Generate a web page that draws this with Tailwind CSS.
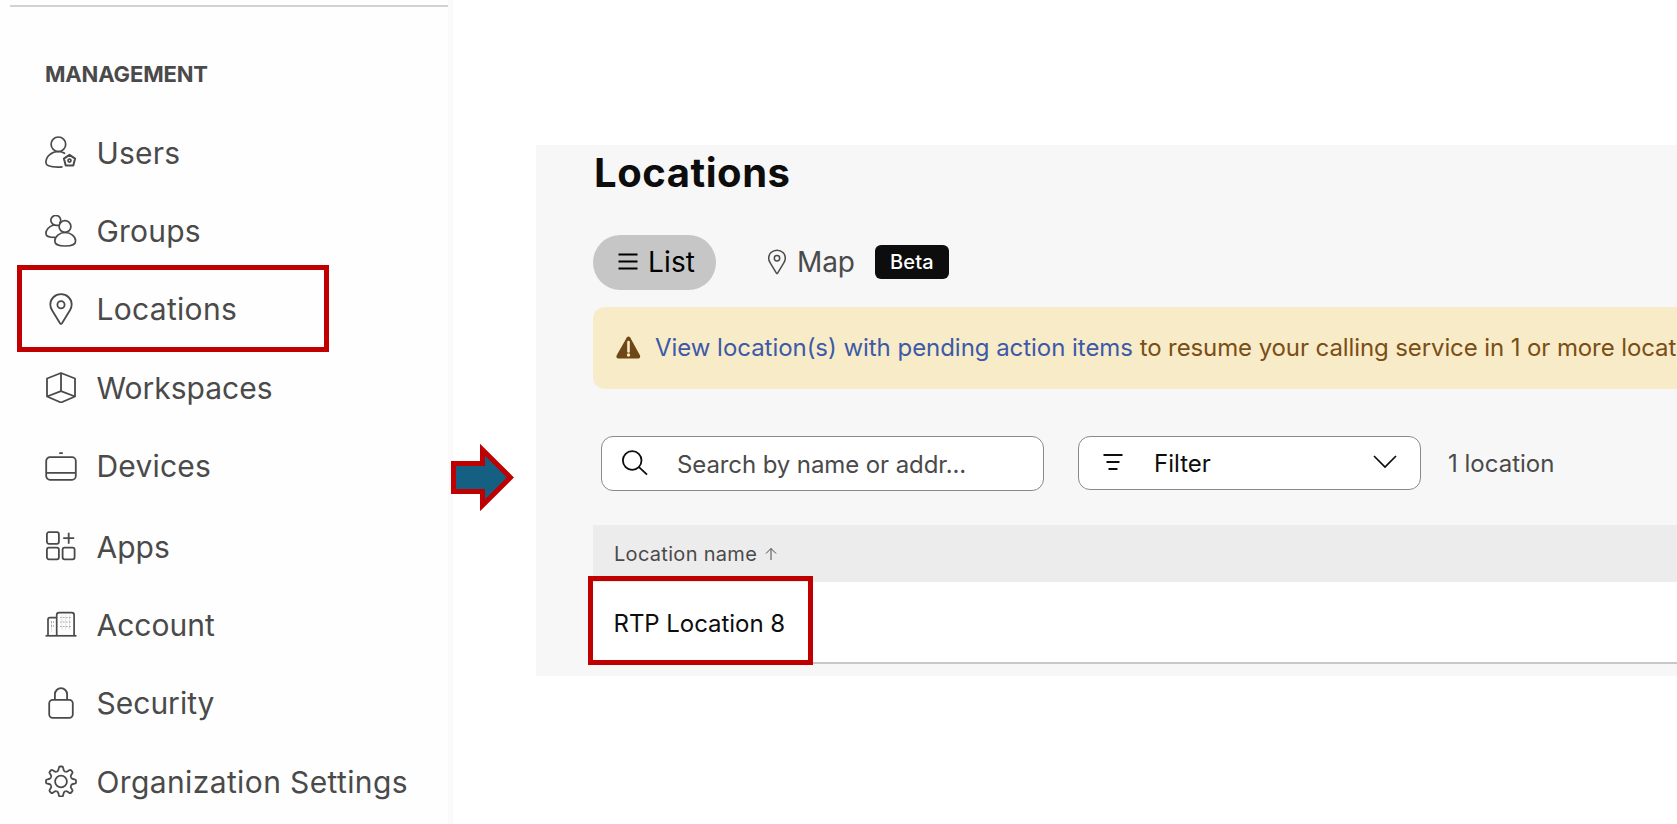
<!DOCTYPE html>
<html lang="en">
<head>
<meta charset="utf-8">
<title>Locations</title>
<script src="https://cdn.jsdelivr.net/npm/@tailwindcss/browser@4"></script>
</head>
<body class="h-[824px] w-[1677px] overflow-hidden bg-white font-['Inter',sans-serif]">
<div class="relative flex h-[824px] w-[1677px] overflow-hidden">

  <aside class="flex h-full w-[453px] shrink-0 border-r-[5px] border-[#fafafa] bg-[#fefefe]">
    <div class="mt-[5px] ml-[10px] flex w-[438px] flex-col border-t-2 border-[#d2d2d2] pl-[35px] text-[#4a4a4a]">
      <h2 class="mt-[53px] h-7 text-[22px] leading-7 font-bold tracking-[-0.15px] whitespace-nowrap">MANAGEMENT</h2>
      <nav class="mt-[25px] flex flex-col text-[30px] whitespace-nowrap">
        <a class="flex h-[78.4px] items-center gap-[19.5px]">
          <svg class="size-8 shrink-0" viewBox="0 0 32 32" fill="none" stroke="currentColor" stroke-width="1.7"><circle cx="13.4" cy="8.3" r="7.3"/><path d="M19.500 17.300C17.800 16 15.700 15.500 13.400 15.500 7 15.500 .9 20 .9 26.500c0 3.500 5 4.600 12 4.600 1.700 0 3 0 4-.2" stroke-linecap="round"/><path d="M24.500 18.800l5.600 3.800-1.800 6.800h-7.600l-1.800-6.800z" stroke-width="2" stroke-linejoin="round"/><circle cx="24.500" cy="24.600" r="1.500"/></svg>
          <span class="pt-0.5 tracking-[0.2px]">Users</span></a>
        <a class="flex h-[78.4px] items-center gap-[19.5px]">
          <svg class="size-8 shrink-0" viewBox="0 0 32 32" fill="none" stroke="currentColor" stroke-width="1.7"><circle cx="20" cy="11.500" r="5.900"/><path d="M20 17.500c-5.500 0-10.200 4-10.200 8.500 0 3.600 4 5 10.400 5s10.400-1.400 10.400-5c0-4.500-4.700-8.500-10.600-8.500z"/><path d="M14.500 8.500a4.900 4.900 0 1 0-4.600 1.600c.8.200 2.700.2 4 .2M7.800 10.200C4 11.500.9 15 .9 18.400c0 2.700 3 4 9.200 4"/></svg>
          <span class="pt-0.5 tracking-[0.2px]">Groups</span></a>
        <a class="flex h-[78.4px] items-center gap-[19.5px]">
          <svg class="size-8 shrink-0" viewBox="0 0 32 32" fill="none" stroke="currentColor" stroke-width="1.8"><path d="M16 1.200C9.900 1.200 5.300 5.900 5.300 11.500c0 2.200.8 4.200 1.900 6L15 30.300q1 1.400 2 0l7.800-12.800c1.100-1.800 1.900-3.800 1.900-6C26.700 5.900 22.100 1.200 16 1.200z"/><circle cx="16" cy="11.700" r="3.600"/></svg>
          <span class="pt-0.5 tracking-[0.3px]">Locations</span></a>
        <a class="flex h-[78.4px] items-center gap-[19.5px]">
          <svg class="size-8 shrink-0" viewBox="0 -1 32 32" fill="none" stroke="currentColor" stroke-width="1.800" stroke-linejoin="round"><path d="M16 1l14 5.500v18L16 30.500 2 24.500v-18zM16 1v18.200M2 24.500l14-5.300 14 5.300"/></svg>
          <span class="pt-0.5">Workspaces</span></a>
        <a class="flex h-[78.4px] items-center gap-[19.5px]">
          <svg class="size-8 shrink-0" viewBox="0 -1 32 32" fill="none" stroke="currentColor" stroke-width="1.800"><rect x="1.200" y="6.200" width="29.600" height="22.600" rx="3.800"/><path d="M1.200 21.800h29.600M14.200 2.200h3.600"/></svg>
          <span class="pt-0.5 tracking-[0.2px]">Devices</span></a>
        <a class="mt-[2px] flex h-[78.4px] items-center gap-[19.5px]">
          <svg class="size-8 shrink-0" viewBox="0 0 32 32" fill="none" stroke="currentColor" stroke-width="1.800"><rect x="1.900" y="2.200" width="12" height="11.600" rx="2"/><rect x="1.900" y="17.700" width="12" height="11.600" rx="2"/><rect x="17.600" y="17.700" width="12" height="11.600" rx="2"/><path d="M18.200 8.200h11M23.700 2.700v11"/></svg>
          <span class="pt-0.5">Apps</span></a>
        <a class="flex h-[78.4px] items-center gap-[19.5px]">
          <svg class="size-8 shrink-0" viewBox="0 1 32 32" fill="none" stroke="currentColor" stroke-width="1.700"><path d="M.5 27.800h31"/><path d="M11.700 27.800V7c0-1.600.8-2.400 2.400-2.400h12.600c1.600 0 2.400.8 2.400 2.400v20.800M3 27.800V11.600c0-1.400.6-2 2-2h6.700"/><path d="M15 9.500h11M15 14h11M15 18.500h11" stroke-dasharray="1.600 1.400" stroke-width="1.200" opacity=".45"/><path d="M17 7v15M20.700 7v15M24.400 7v15M6.500 13v11" stroke-width=".8" opacity=".2"/><path d="M6 14h3M6 18h3" stroke-dasharray="1 1" opacity=".5"/></svg>
          <span class="pt-0.5">Account</span></a>
        <a class="flex h-[78.4px] items-center gap-[19.5px]">
          <svg class="size-8 shrink-0" viewBox="0 0 32 32" fill="none" stroke="currentColor" stroke-width="1.800"><rect x="4.200" y="12.800" width="23.600" height="18" rx="3.500"/><path d="M9.900 12.800V7.300a6.100 6.100 0 0 1 12.200 0v5.500"/></svg>
          <span class="pt-0.5">Security</span></a>
        <a class="flex h-[78.4px] items-center gap-[19.5px]">
          <svg class="size-8 shrink-0" viewBox="-16 -16.500 32 32" fill="none" stroke="currentColor" stroke-width="1.800" stroke-linejoin="round"><circle r="5.900"/><path id="tooth" d="M-4.130 -9.980C-3 -10.300-2.700 -11-2.500 -12L-2.200 -13.600Q-2 -15-.9 -15H.9Q2 -15 2.200 -13.600L2.500 -12C2.700 -11 3 -10.300 4.130 -9.980"/><use href="#tooth" transform="rotate(45)"/><use href="#tooth" transform="rotate(90)"/><use href="#tooth" transform="rotate(135)"/><use href="#tooth" transform="rotate(180)"/><use href="#tooth" transform="rotate(225)"/><use href="#tooth" transform="rotate(270)"/><use href="#tooth" transform="rotate(315)"/></svg>
          <span class="pt-0.5 tracking-[0.38px]">Organization Settings</span></a>
      </nav>
    </div>
  </aside>

  <main class="mt-[145px] ml-[83px] flex h-[531px] flex-1 flex-col overflow-hidden bg-[#f7f7f7] pl-[57px] whitespace-nowrap">
    <h1 class="mt-1 h-12 pl-px text-[40px] leading-12 font-bold tracking-[0.55px] text-[#0d0d0d]">Locations</h1>
    <div class="mt-[38px] flex h-[55px] items-center text-[28px]">
      <div class="flex h-[55px] w-[123px] items-center rounded-full bg-[#c6c6c6] pb-0.5 pl-6 text-black">
        <svg class="mr-[9px] h-5 w-[22px]" viewBox="0 0 22 20" fill="none" stroke="currentColor" stroke-width="1.800"><path d="M1.500 2.500h19M1.500 9.500h19M1.500 16.500h19"/></svg>
        <span class="tracking-[0.15px]">List</span></div>
      <div class="ml-[51px] flex items-center pb-0.5 text-[#4a4a4a]">
        <svg class="mr-[10px] h-[26px] w-[20px]" viewBox="0 0 20 26" fill="none" stroke="currentColor" stroke-width="1.500"><path d="M10 1.200c-4.800 0-8.300 3.600-8.300 8 0 1.700.6 3.300 1.500 4.700l6.200 10.300q.6.900 1.200 0l6.200-10.300c.9-1.400 1.500-3 1.500-4.700 0-4.400-3.500-8-8.300-8z"/><circle cx="10" cy="9.300" r="2.700"/></svg>
        <span class="tracking-[-0.1px]">Map</span></div>
      <div class="mb-0.5 ml-5 flex h-[34px] w-[74px] items-center justify-center rounded-md bg-[#0d0d0d] text-xl font-medium tracking-[0.2px] text-white">Beta</div>
    </div>
    <div class="mt-[17px] flex h-[82px] shrink-0 items-center rounded-l-[12px] bg-[#f8ebc8] pl-[23px] text-[24px] text-[#7a4e16]">
      <svg class="mr-[14px] h-[24px] w-[25px] shrink-0" viewBox="0 0 25 24"><path d="M10.800 1.500q1.700-2.200 3.400 0l9.800 18q.8 3-1.800 3H2.200q-2.400 0-1.600-3z" fill="#6f4615"/><path d="M12.500 6v9.500" stroke="#f8ebc8" stroke-width="2.600" stroke-linecap="round"/><circle cx="12.500" cy="19" r="1.700" fill="#f8ebc8"/></svg>
      <p class="tracking-[-0.1px]"><span class="tracking-[-0.04px] text-[#3c5aa8]">View location(s) with pending action items</span> to resume your calling service in 1 or more locat</p>
    </div>
    <div class="mt-[47px] ml-2 flex h-[55px] shrink-0 items-start text-[24px]">
      <div class="flex h-[55px] w-[443px] items-center rounded-[12px] border border-[#8a8a8a] bg-white pl-5 text-[#4a4a4a]">
        <svg class="mr-[29px] mb-0.5 size-[26px]" viewBox="0 0 26 26" fill="none" stroke="#0d0d0d" stroke-width="1.800"><circle cx="10.200" cy="10.500" r="9.300"/><path d="M17 17.200l8 7.500"/></svg>
        <span class="pt-0.5 tracking-[-0.1px]">Search by name or addr...</span></div>
      <div class="ml-[34px] flex h-[54px] w-[343px] items-center rounded-[12px] border border-[#8a8a8a] bg-white pl-6 text-[#0d0d0d]">
        <svg class="mr-[31px] mb-0.5 h-[18px] w-[20px]" viewBox="0 0 20 18" fill="none" stroke="currentColor" stroke-width="1.800"><path d="M.5 2h19M3.500 9h13M5.500 16h9"/></svg>
        <span class="pt-0.5">Filter</span>
        <svg class="mr-[23px] mb-0.5 ml-auto h-[14px] w-[24px]" viewBox="0 0 24 14" fill="none" stroke="currentColor" stroke-width="1.700"><path d="M1 1l11 11L23 1"/></svg></div>
      <div class="ml-[27px] flex h-[54px] items-center pt-0.5 text-[#4a4a4a]">1 location</div>
    </div>
    <div class="mt-[34px] flex h-[57px] shrink-0 items-center bg-[#ececec] pl-[21px] text-xl tracking-[0.3px] text-[#4a4a4a]">Location name
      <svg class="ml-2 h-[14px] w-[12px]" viewBox="0 0 12 14" fill="none" stroke="currentColor" stroke-width="1"><path d="M6 13V1.500M1 6.500l5-5 5 5"/></svg></div>
    <div class="flex h-[82px] shrink-0 items-center border-b-2 border-[#c8c8c8] bg-white pt-[3px] pl-[20.500px] text-[24px] tracking-[-0.05px] text-[#0d0d0d]">RTP Location 8</div>
  </main>

  <div class="absolute top-[265px] left-[17px] h-[87px] w-[312px] border-[5px] border-[#c00000]"></div>
  <div class="absolute top-[576px] left-[588px] h-[89px] w-[225px] border-[5px] border-[#c00000]"></div>
  <svg class="absolute top-[440px] left-[448px] h-[76px] w-[70px]" viewBox="448 440 70 76"><path d="M453.500 463.500h29v-13.800l27.900 27.800-27.900 27.800v-13.800h-29z" fill="#156082" stroke="#c00000" stroke-width="5" stroke-miterlimit="10"/></svg>
</div>
</body>
</html>
